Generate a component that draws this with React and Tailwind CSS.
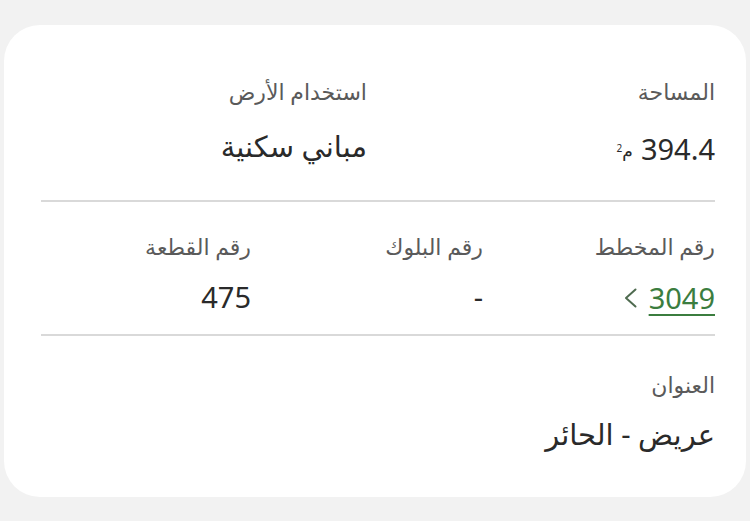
const FONT = { fontFamily: '"Noto Sans", "DejaVu Sans", sans-serif' }

function Field({ label, gap, children }) {
  return (
    <div className="flex flex-col items-start">
      <p className="text-[22px] leading-[30px] text-[#5a5a5a]">{label}</p>
      <div className={`${gap} text-[29px] leading-[36px] text-[#2a2a2a]`}>{children}</div>
    </div>
  )
}

export default function App() {
  return (
    <div dir="rtl" className="h-[521px] w-[750px] bg-[#f2f2f2] pt-[25px] pl-[4px] pr-[4px]" style={FONT}>
      <section className="h-[472px] rounded-[36px] bg-white pl-[37px] pr-[31px] pt-[51px]">
        <div className="grid grid-cols-2 gap-x-[22px] pb-[29px]">
          <Field label="المساحة" gap="mt-[22px]">
            <span dir="ltr" className="inline-flex items-start">
              <span className="mr-[8px] text-[17px] leading-[40px]">
                م<sup className="text-[10px]">2</sup>
              </span>
              <span>394.4</span>
            </span>
          </Field>
          <Field label="استخدام الأرض" gap="mt-[22px]">مباني سكنية</Field>
        </div>
        <hr className="border-t-2 border-[#d9d9d9]" />
        <div className="grid grid-cols-3 gap-x-[22px] pt-[29px] pb-[18px]">
          <Field label="رقم المخطط" gap="mt-[18px]">
            <span dir="ltr" className="inline-flex items-center gap-[12px] text-[#3b7d3f]">
              <svg width="13" height="20" viewBox="0 0 13 20" fill="none" stroke="#4f6b50" strokeWidth="2" strokeLinecap="round" strokeLinejoin="round">
                <path d="M11.5 1.5 L2 10 L11.5 18.5" />
              </svg>
              <span className="underline decoration-2 underline-offset-[5px]">3049</span>
            </span>
          </Field>
          <Field label="رقم البلوك" gap="mt-[18px]">-</Field>
          <Field label="رقم القطعة" gap="mt-[18px]">475</Field>
        </div>
        <hr className="border-t-2 border-[#d9d9d9]" />
        <div className="pt-[33px]">
          <Field label="العنوان" gap="mt-[17px]">عريض - الحائر</Field>
        </div>
      </section>
    </div>
  )
}
